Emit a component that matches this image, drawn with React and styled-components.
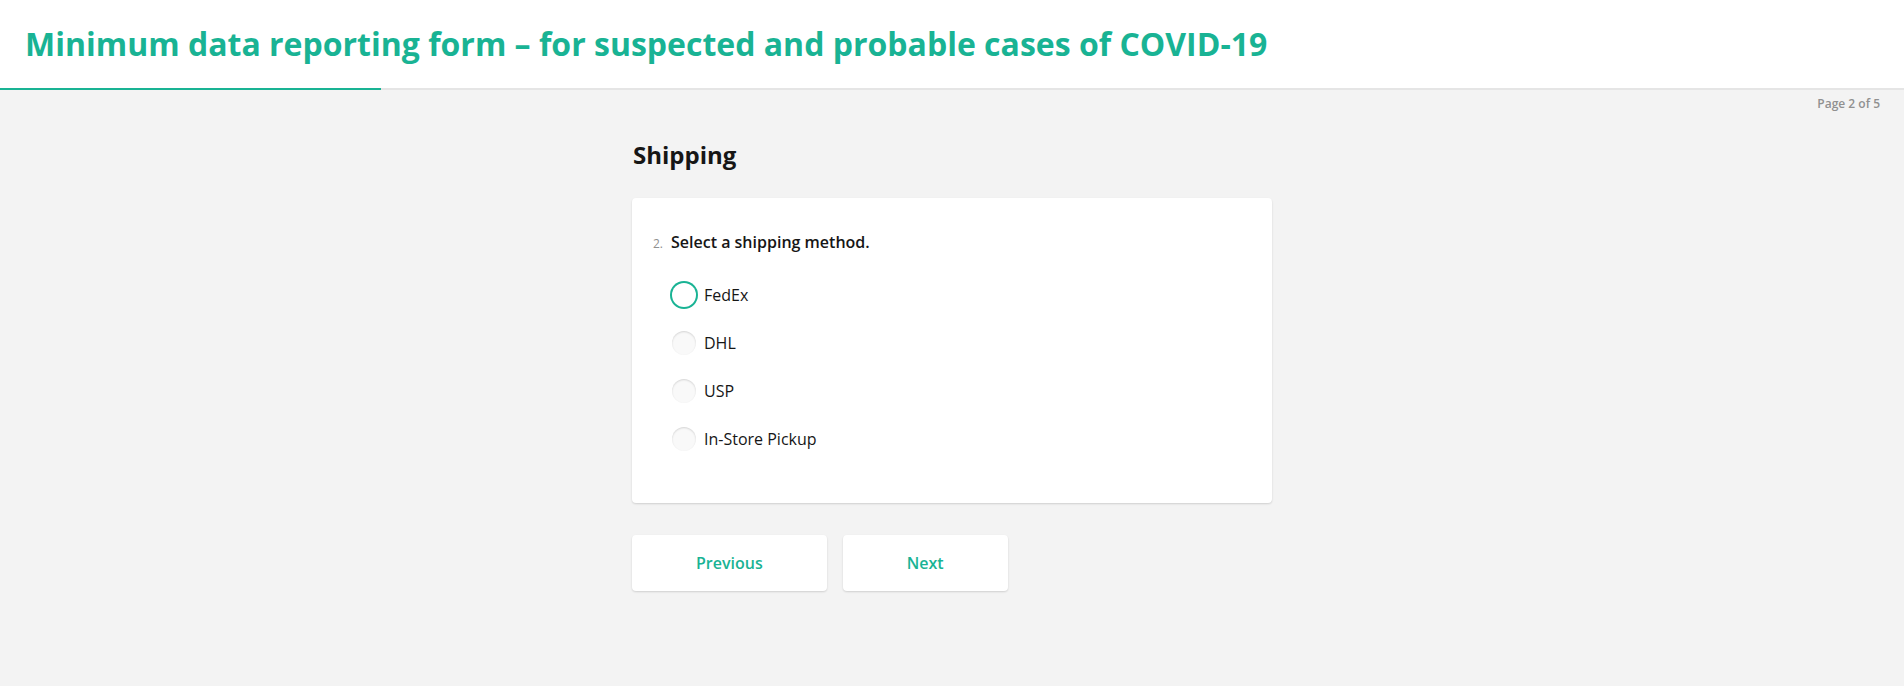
import React from 'react';
import styled, { createGlobalStyle } from 'styled-components';

const GlobalStyle = createGlobalStyle`
  body {
    margin: 0;
    background: #f3f3f3;
    font-family: "Open Sans", "Noto Sans", sans-serif;
    color: #161616;
  }
`;

const Page = styled.div`
  min-height: 686px;
  background: #f3f3f3;
`;

const Header = styled.header`
  background: #fff;
  height: 88px;
  display: flex;
  align-items: center;
  padding: 0 25px;
  box-sizing: border-box;
`;

const Title = styled.h1`
  margin: 0;
  font-size: 32px;
  line-height: 40px;
  font-weight: 700;
  color: #19b394;
  padding-bottom: 1px;
`;

const Progress = styled.div`
  height: 2px;
  background: #e5e5e5;
`;

const ProgressFill = styled.div`
  height: 100%;
  background: #19b394;
`;

const PageInfo = styled.div`
  display: flex;
  justify-content: flex-end;
  padding: 6px 24px 0;
  font-size: 12px;
  line-height: 16px;
  font-weight: 600;
  color: #909090;
`;

const Body = styled.main`
  width: 640px;
  margin: 0 auto;
  padding-top: 27px;
`;

const PageTitle = styled.h2`
  margin: 0 0 27px 1px;
  font-size: 24px;
  line-height: 32px;
  font-weight: 700;
  color: #161616;
`;

const Card = styled.section`
  background: #fff;
  border-radius: 4px;
  box-shadow: 0 1px 2px rgba(0, 0, 0, 0.15);
  padding: 24px 24px 40px 21px;
  min-height: 305px;
  box-sizing: border-box;
`;

const Question = styled.div`
  display: flex;
  align-items: baseline;
  gap: 8px;
  margin-top: 8px;
`;

const Number = styled.span`
  font-size: 12px;
  color: #909090;
`;

const QuestionText = styled.span`
  font-size: 16px;
  line-height: 24px;
  font-weight: 600;
`;

const Options = styled.div`
  display: flex;
  flex-direction: column;
  gap: 24px;
  margin-top: 29px;
  padding-left: 19px;
`;

const Option = styled.label`
  display: flex;
  align-items: center;
  gap: 8px;
  font-size: 16px;
  line-height: 24px;
`;

const Radio = styled.span`
  width: 24px;
  height: 24px;
  border-radius: 50%;
  box-sizing: border-box;
  background: ${(p) => (p.$focused ? '#fff' : '#f9f9f9')};
  box-shadow: ${(p) =>
    p.$focused ? '0 0 0 2px #19b394' : 'inset 0 1px 2px rgba(0, 0, 0, 0.15)'};
  flex-shrink: 0;
`;

const Nav = styled.div`
  display: flex;
  gap: 16px;
  margin-top: 32px;
`;

const Button = styled.button`
  height: 56px;
  padding: 0 64px;
  border: none;
  border-radius: 4px;
  background: #fff;
  box-shadow: 0 1px 2px rgba(0, 0, 0, 0.15);
  font-family: inherit;
  font-size: 16px;
  font-weight: 600;
  color: #19b394;
  cursor: pointer;
`;

const options = ['FedEx', 'DHL', 'USP', 'In-Store Pickup'];

export default function App() {
  return (
    <Page>
      <GlobalStyle />
      <Header>
        <Title>Minimum data reporting form – for suspected and probable cases of COVID-19</Title>
      </Header>
      <Progress>
        <ProgressFill style={{ width: '20%' }} />
      </Progress>
      <PageInfo>Page 2 of 5</PageInfo>
      <Body>
        <PageTitle>Shipping</PageTitle>
        <Card>
          <Question>
            <Number>2.</Number>
            <QuestionText>Select a shipping method.</QuestionText>
          </Question>
          <Options>
            {options.map((o, i) => (
              <Option key={o}>
                <Radio $focused={i === 0} />
                {o}
              </Option>
            ))}
          </Options>
        </Card>
        <Nav>
          <Button>Previous</Button>
          <Button>Next</Button>
        </Nav>
      </Body>
    </Page>
  );
}
